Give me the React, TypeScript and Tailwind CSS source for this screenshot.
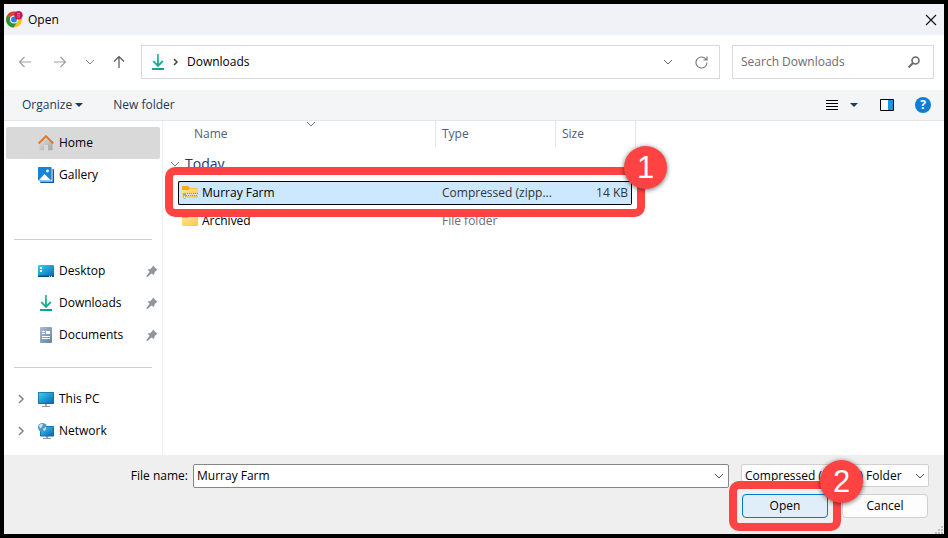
import type { ReactNode } from "react";

type IconProps = { className?: string };

function Chevron({ d, className }: IconProps & { d: string }) {
  return (
    <svg className={className} width="10" height="10" viewBox="0 0 10 10" fill="none" stroke="currentColor">
      <path d={d} />
    </svg>
  );
}

const DOWN = "M1 3l4 4 4-4";
const RIGHT = "M3 1l4 4-4 4";

function ChromeIcon() {
  return (
    <svg width="17" height="17" viewBox="0 0 17 17">
      <circle cx="8" cy="8.500" r="8" fill="#fbc116" />
      <path d="M8 8.500L1.100 4.500A8 8 0 0 1 15 4.700z" fill="#e33b2e" />
      <path d="M8 8.500L1.100 4.500A8 8 0 0 0 7.500 16.500L11.500 10.500z" fill="#229342" />
      <circle cx="8" cy="8.500" r="4" fill="#fff" />
      <circle cx="8" cy="8.500" r="3" fill="#2f7de9" />
      <circle cx="12.500" cy="4.200" r="4.200" fill="#c2185b" />
      <path d="M11 2.500h3M11 4.200h3M11 6h3" stroke="#ee7fae" strokeWidth="0.800" />
    </svg>
  );
}

function ArrowIcon({ d, className }: IconProps & { d: string }) {
  return (
    <svg className={className} width="14" height="14" viewBox="0 0 14 14" fill="none" stroke="currentColor" strokeWidth="1.200">
      <path d={d} />
    </svg>
  );
}

function DownloadIcon() {
  return (
    <svg width="16" height="16" viewBox="0 0 16 16" fill="none" stroke="url(#dl)" strokeWidth="1.900">
      <defs>
        <linearGradient id="dl" gradientUnits="userSpaceOnUse" x1="3" y1="0" x2="12" y2="16">
          <stop stopColor="#3cc99a" />
          <stop offset="1" stopColor="#0b9a94" />
        </linearGradient>
      </defs>
      <path d="M7.900 0L8 12M3.200 7L8 11.800 12.800 7M2 15h12" />
    </svg>
  );
}

function HomeIcon() {
  return (
    <svg width="16" height="16" viewBox="0 0 16 16">
      <defs>
        <linearGradient id="wall" x1="0" y1="0" x2="1" y2="1">
          <stop stopColor="#e6e6e6" />
          <stop offset="1" stopColor="#a3a3a3" />
        </linearGradient>
      </defs>
      <path d="M1.500 8.500L8 2l6.500 6.500v6.800H10V10H6v5.300H1.500z" fill="url(#wall)" />
      <path d="M0.700 8.500L8 1.200l7.300 7.300" fill="none" stroke="#e8751a" strokeWidth="1.900" />
    </svg>
  );
}

function GalleryIcon() {
  return (
    <svg width="16" height="16" viewBox="0 0 16 16">
      <path d="M3 2h12a1 1 0 0 1 1 1v13H3a1 1 0 0 1-1-1z" fill="#0b59ad" />
      <path d="M0 0h14.500v14.500H0z" fill="#fff" />
      <rect width="13.600" height="13.600" rx="0.800" fill="#1583d8" />
      <path d="M1 13L6.500 7 12.500 13z" fill="#fff" />
      <circle cx="9.500" cy="4" r="1.400" fill="#fff" />
    </svg>
  );
}

function DesktopIcon() {
  return (
    <svg width="16" height="16" viewBox="0 0 16 16">
      <defs>
        <linearGradient id="screen" x1="0" y1="0" x2="1" y2="1">
          <stop stopColor="#35d2e8" />
          <stop offset="1" stopColor="#0c63b8" />
        </linearGradient>
      </defs>
      <rect y="2" width="16" height="12" rx="1" fill="url(#screen)" />
      <path d="M2 4h2v2H2zM2 7h2v2H2z" fill="#fff" />
      <path d="M0 12.500h16V13a1 1 0 0 1-1 1H1a1 1 0 0 1-1-1z" fill="#0b4a86" />
      <path d="M11 13.300h1M13 13.300h1" stroke="#fff" />
    </svg>
  );
}

function DocumentsIcon() {
  return (
    <svg width="16" height="16" viewBox="0 0 16 16">
      <defs>
        <linearGradient id="paper" x1="0" y1="0" x2="1" y2="1">
          <stop stopColor="#a9bdd2" />
          <stop offset="1" stopColor="#66829f" />
        </linearGradient>
      </defs>
      <rect x="2" width="12" height="16" rx="1" fill="url(#paper)" />
      <path d="M4 4.500h3M4 6.500h3M4 9.500h8M4 11.500h8" stroke="#fff" />
      <path d="M8 4h4v3H8z" fill="#fff" />
    </svg>
  );
}

function MonitorIcon() {
  return (
    <svg width="16" height="16" viewBox="0 0 16 16">
      <path d="M7 13h2v2H7z" fill="#9aa8b5" />
      <path d="M4 15.500h8" stroke="#8d9cab" />
      <rect y="1" width="16" height="12" rx="0.800" fill="#17609c" />
      <rect x="0.700" y="1.700" width="14.600" height="10.600" fill="url(#screen)" />
    </svg>
  );
}

function NetworkIcon() {
  return (
    <svg width="16" height="16" viewBox="0 0 16 16">
      <path d="M8 13h2v2H8z" fill="#9aa8b5" />
      <path d="M5 15.500h8" stroke="#8d9cab" />
      <rect x="2" y="3" width="14" height="10.500" rx="0.800" fill="#17609c" />
      <rect x="2.700" y="3.700" width="12.600" height="9" fill="url(#screen)" />
      <circle cx="4.500" cy="4.500" r="4.500" fill="#4d9bc8" />
      <path d="M1 2.500Q3 0 5 1L4 4 2 5.500zM5 6l3-2Q8.500 7 6 8z" fill="#c9e3f0" />
    </svg>
  );
}

function FolderIcon({ zip }: { zip?: boolean }) {
  return (
    <svg width="16" height="16" viewBox="0 0 16 16">
      <defs>
        <linearGradient id="folder" x1="0" y1="0" x2="1" y2="1">
          <stop stopColor="#ffe595" />
          <stop offset="1" stopColor="#fbc846" />
        </linearGradient>
      </defs>
      <path d="M0 3.500V2a1 1 0 0 1 1-1h5l2 2h7a1 1 0 0 1 1 1v3H0z" fill="#f6ad0b" />
      <path d="M0 5h6l2-1.500h7.500a.5.5 0 0 1 .5.5V12a1 1 0 0 1-1 1H1a1 1 0 0 1-1-1z" fill="url(#folder)" />
      {zip && (
        <>
          <path d="M3 8.500h13" stroke="#8a8a8a" strokeDasharray="1 1" />
          <path d="M4 10.500h12" stroke="#8a8a8a" strokeDasharray="1 1" />
          <path d="M3 9.500h13" stroke="#e2e2e2" />
          <path d="M1 8h3v2.500L3.200 14H1.800L1 10.500z" fill="#a8a8a8" />
          <path d="M2 11h1v2H2z" fill="#ececec" />
        </>
      )}
    </svg>
  );
}

function PinIcon() {
  return (
    <svg width="12" height="12" viewBox="0 0 12 12" fill="#8d979f">
      <path d="M7 0.500L11.500 5 10 5.800 8.500 7.500 8 10 5.500 8.500 1.500 12H0.500V11L3.500 6.800 1.500 4.500 4.300 4 6.200 2.200z" />
    </svg>
  );
}

function SearchIcon() {
  return (
    <svg width="12" height="12" viewBox="0 0 12 12" fill="none" stroke="#6b6b6b" strokeWidth="1.600">
      <circle cx="7.500" cy="4.500" r="3.500" />
      <path d="M5 7L0.600 11.400" strokeWidth="2" />
    </svg>
  );
}

function SideItem({ icon, label, pinned, expandable, active }: {
  icon: ReactNode;
  label: string;
  pinned?: boolean;
  expandable?: boolean;
  active?: boolean;
}) {
  return (
    <li>
      <a
        href="#"
        className={`flex h-8 items-center rounded-xs pr-[2px] pl-[10px] ${active ? "bg-[#d9d9d9]" : ""}`}
      >
        <span className="w-[22px] text-[#858585]">
          {expandable && <Chevron d={RIGHT} className="stroke-[1.5]" />}
        </span>
        {icon}
        <span className="ml-[5px] grow">{label}</span>
        {pinned && <PinIcon />}
      </a>
    </li>
  );
}

function Divider() {
  return (
    <li className="flex h-8 items-center pr-2 pl-2">
      <hr className="grow border-[#cfcfcf]" />
    </li>
  );
}

function Badge({ children }: { children: ReactNode }) {
  return (
    <span className="pointer-events-none absolute -top-[29px] -right-[30px] flex h-[43px] w-[43px] items-center justify-center rounded-full bg-[#ff4343] font-['Liberation_Sans',sans-serif] text-[31px] text-white shadow-[0_1px_5px_rgba(0,0,0,0.6)]">
      {children}
    </span>
  );
}

function App() {
  return (
    <div className="flex min-h-screen flex-col border-4 border-black bg-white font-['Open_Sans','Noto_Sans',sans-serif] text-xs text-black">
      <header className="flex h-[31px] items-center bg-[#f0f2f8] pr-[7px] pl-[2px]">
        <ChromeIcon />
        <h1 className="ml-[5px] grow">Open</h1>
        <button aria-label="Close">
          <svg width="12" height="12" viewBox="0 0 12 12" stroke="#111" strokeWidth="1.100">
            <path d="M1 1l10 10M11 1L1 11" />
          </svg>
        </button>
      </header>

      <nav className="flex items-center pt-[10px] pr-[10px] pb-[11px] pl-[14px]">
        <button aria-label="Back"><ArrowIcon className="text-[#a0a0a0]" d="M13 7H1.500M6.500 2l-5 5 5 5" /></button>
        <button aria-label="Forward" className="ml-[21px]"><ArrowIcon className="text-[#a0a0a0]" d="M1 7h11.500M7.500 2l5 5-5 5" /></button>
        <button aria-label="Recent locations" className="ml-[18px]"><Chevron className="text-[#8a8a8a]" d={DOWN} /></button>
        <button aria-label="Up" className="ml-[17px]"><ArrowIcon className="text-[#555]" d="M7 13V1.500M2 6.500l5-5 5 5" /></button>
        <div className="ml-[15px] flex h-[34px] grow items-center border border-[#d9d9d9] pr-[11px] pl-2">
          <DownloadIcon />
          <Chevron className="mx-[5px] stroke-[1.5] text-[#444]" d="M3 2l3 3-3 3" />
          <a href="#" className="ml-[1px] grow">Downloads</a>
          <button aria-label="Previous locations" className="mr-[22px]"><Chevron className="text-[#666]" d={DOWN} /></button>
          <button aria-label="Refresh">
            <svg width="13" height="13" viewBox="0 0 13 13" fill="none" stroke="#777" strokeWidth="1.100">
              <path d="M12 6.500A5.500 5.500 0 1 1 10.500 2.700L12 4M12 0.500V4H8.500" />
            </svg>
          </button>
        </div>
        <label className="ml-3 flex h-[34px] w-[202px] items-center border border-[#d9d9d9] pr-[13px] pl-2">
          <input type="search" aria-label="Search Downloads" placeholder="Search Downloads" className="w-0 grow outline-none placeholder:text-[#6d6d6d]" />
          <SearchIcon />
        </label>
      </nav>

      <div className="flex h-[31px] items-center border-b border-[#e5e5e5] bg-[#f4f5f7] pr-[13px] pl-[18px] text-[#1e395b]">
        <button className="flex items-center gap-[3px]">
          Organize
          <svg width="8" height="4" viewBox="0 0 8 4" fill="currentColor"><path d="M0 0h8L4 4z" /></svg>
        </button>
        <button className="ml-[30px]">New folder</button>
        <button aria-label="View" className="ml-auto flex items-center gap-3">
          <svg width="12" height="12" viewBox="0 0 12 12" stroke="#000">
            <path d="M0 1.500h12M0 4.500h12M0 7.500h12M0 10.500h12" />
          </svg>
          <svg width="8" height="4" viewBox="0 0 8 4" fill="currentColor"><path d="M0 0h8L4 4z" /></svg>
        </button>
        <button aria-label="Preview pane" className="ml-[22px]">
          <svg width="14" height="12" viewBox="0 0 14 12">
            <path d="M0.500 0.500h13v11h-13z" fill="#fff" stroke="#000" />
            <path d="M8 1h5v10H8z" fill="#1d94e0" />
          </svg>
        </button>
        <button aria-label="Help" className="ml-[21px] h-4 w-4 rounded-full bg-[#0f7fd6] text-xs leading-4 font-bold text-white">?</button>
      </div>

      <main className="flex grow">
        <ul className="w-[159px] shrink-0 border-r border-[#f0f0f0] pt-[6px] pr-[2px] pl-[2px]">
          <SideItem icon={<HomeIcon />} label="Home" active />
          <SideItem icon={<GalleryIcon />} label="Gallery" />
          <li className="h-8" />
          <Divider />
          <SideItem icon={<DesktopIcon />} label="Desktop" pinned />
          <SideItem icon={<DownloadIcon />} label="Downloads" pinned />
          <SideItem icon={<DocumentsIcon />} label="Documents" pinned />
          <Divider />
          <SideItem icon={<MonitorIcon />} label="This PC" expandable />
          <SideItem icon={<NetworkIcon />} label="Network" expandable />
        </ul>

        <div className="relative self-start pl-[15px]">
          <table className="w-[458px] table-fixed border-separate border-spacing-0 text-left">
            <thead className="text-[#4c607a]">
              <tr className="h-[26px]">
                <th className="relative w-[258px] border-r border-[#e5e5e5] p-0 pl-4 font-normal">
                  Name
                  <Chevron className="absolute -top-[2px] left-32 text-[#777]" d={DOWN} />
                </th>
                <th className="w-[120px] border-r border-[#e5e5e5] p-0 pl-[6px] font-normal">Type</th>
                <th className="w-20 border-r border-[#e5e5e5] p-0 pl-[6px] font-normal">Size</th>
              </tr>
            </thead>
            <tbody>
              <tr className="h-8">
                <th colSpan={3} className="p-0 pt-[2px] font-normal">
                  <button className="-ml-2 flex items-center gap-[5px] text-sm text-[#1e3287]">
                    <Chevron className="text-[#777]" d={DOWN} />
                    Today
                  </button>
                </th>
              </tr>
              <tr className="h-7">
                <td className="p-0">
                  <div className="flex h-6 items-center gap-1 rounded-l-xs border border-r-0 border-black bg-[#cce8ff] pl-[3px]">
                    <FolderIcon zip />
                    Murray Farm
                  </div>
                </td>
                <td className="p-0">
                  <div className="flex h-6 items-center border-y border-black bg-[#cce8ff] pl-[6px] text-[#333]">Compressed (zipp...</div>
                </td>
                <td className="p-0">
                  <div className="mr-1 flex h-6 items-center justify-end rounded-r-xs border border-l-0 border-black bg-[#cce8ff] pr-[3px] text-[#333]">14 KB</div>
                </td>
              </tr>
              <tr className="h-7">
                <td className="p-0">
                  <div className="flex items-center gap-1 pl-1">
                    <FolderIcon />
                    Archived
                  </div>
                </td>
                <td className="p-0 pl-[6px] text-[#6d6d6d]">File folder</td>
                <td />
              </tr>
            </tbody>
          </table>
          <div className="pointer-events-none absolute top-[46px] left-[2px] h-[50px] w-[480px] rounded-[10px] border-8 border-[#ff4343]">
            <Badge>1</Badge>
          </div>
        </div>
      </main>

      <footer className="relative flex h-[79px] flex-col bg-[#efefef] pt-[9px] pr-[15px]">
        <div className="flex">
          <label htmlFor="file-name" className="w-[189px] pr-[5px] text-right leading-6">File name:</label>
          <div className="flex h-6 grow items-center rounded-xs border border-[#868686] bg-white pr-1 pl-[3px]">
            <input id="file-name" defaultValue="Murray Farm" className="grow outline-none" />
            <button aria-label="Show recent names"><Chevron className="text-[#555]" d={DOWN} /></button>
          </div>
          <div className="relative ml-3 w-[188px]">
            <select aria-label="File type" className="h-[23px] w-full appearance-none rounded-xs border border-[#d0d0d0] bg-[#fdfdfd] pl-[3px]">
              <option>Compressed (zipped) Folder</option>
            </select>
            <Chevron className="pointer-events-none absolute top-[7px] right-[4px] text-[#555]" d={DOWN} />
          </div>
        </div>
        <div className="mt-[6px] flex justify-end gap-[14px] pr-px">
          <div className="relative">
            <button className="h-6 w-[86px] rounded-sm border border-[#0078d4] bg-[#e0eef9]">Open</button>
            <div className="pointer-events-none absolute -top-[13px] -left-[13px] h-[50px] w-28 rounded-[10px] border-8 border-[#ff4343]">
              <Badge>2</Badge>
            </div>
          </div>
          <button className="h-6 w-[86px] rounded-sm border border-[#d0d0d0] bg-[#fdfdfd]">Cancel</button>
        </div>
        <svg className="absolute right-[1px] bottom-0" width="8" height="8" viewBox="0 0 8 8" fill="#bfbfbf">
          <path d="M6 0h2v2H6zM3 3h2v2H3zM6 3h2v2H6zM0 6h2v2H0zM3 6h2v2H3zM6 6h2v2H6z" />
        </svg>
      </footer>
    </div>
  );
}

export default App;
